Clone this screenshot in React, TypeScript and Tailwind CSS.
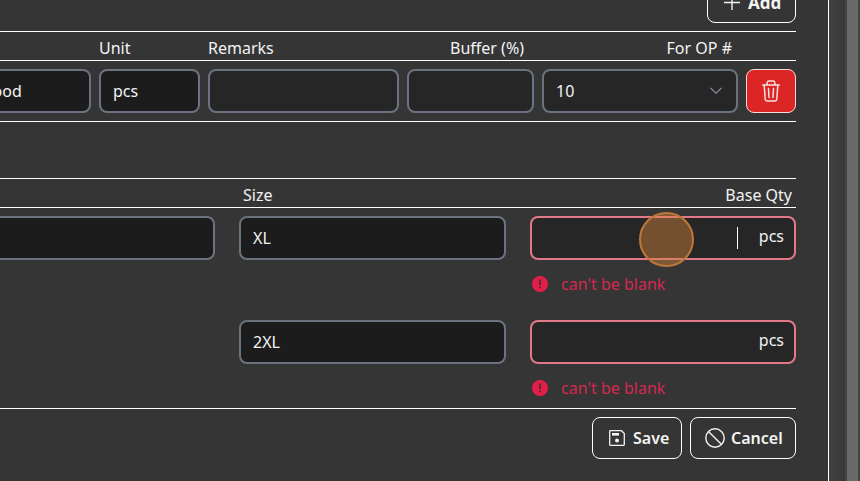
import type { ReactNode } from "react";

function Field({ children, className = "", tone = "bg-[#1c1c1c]" }: { children?: ReactNode; className?: string; tone?: string }) {
  return (
    <div className={`flex h-11 shrink-0 items-center rounded-lg border-2 border-[#6b7280] ${tone} ${className}`}>
      {children}
    </div>
  );
}

function QuantityField({ focused = false }: { focused?: boolean }) {
  return (
    <div className="flex h-[104px] w-[266px] flex-col">
      <div className="relative flex h-11 items-center justify-end rounded-lg border-2 border-[#e27888] bg-[#262626] pr-2.5 pb-1">
        {focused && <span className="mt-[3px] mr-[21px] h-[22px] w-px bg-white" />}
        <span>pcs</span>
        {focused && (
          <span className="absolute -top-[6px] left-[107px] size-[55px] rounded-full border-2 border-[#bd7738] bg-[#d6853f]/45" />
        )}
      </div>
      <p className="mt-3 flex items-center gap-[13px] pl-0.5 text-[#d42850]">
        <svg className="size-4" viewBox="0 0 16 16">
          <circle cx="8" cy="8" r="8" fill="#e11d48" />
          <path d="M8 4v4.5" stroke="#353535" strokeWidth="1.7" strokeLinecap="round" />
          <circle cx="8" cy="11.5" r="1" fill="#353535" />
        </svg>
        <span>can't be blank</span>
      </p>
    </div>
  );
}

export default function App() {
  return (
    <div className="flex h-[481px] w-[860px] overflow-hidden bg-[#353535] font-['Noto_Sans',sans-serif] text-base leading-6 text-[#f3f3f3]">
      <main className="h-full w-[829px] shrink-0 border-r border-white">
        <div className="flex w-[796px] flex-col">
          <div className="flex h-[31px] items-end justify-end pb-2">
            <button className="-mt-[19px] flex h-[42px] w-[89px] items-center gap-2 rounded-lg border border-white pl-4 text-[17px] font-bold">
              <svg className="size-4" viewBox="0 0 16 16" fill="none" stroke="currentColor" strokeWidth="1.4">
                <path d="M0 8.5h16M8 0v16.5" />
              </svg>
              <span className="pt-px">Add</span>
            </button>
          </div>

          <div className="flex h-[30px] items-center border-y border-white pt-[3px]">
            <span className="ml-[99px] w-[109px]">Unit</span>
            <span className="w-[191px]">Remarks</span>
            <span className="w-[125px] text-right">Buffer (%)</span>
            <span className="w-[208px] text-right">For OP #</span>
          </div>
          <div className="flex h-[61px] items-center gap-2 border-b border-white">
            <Field className="-ml-10 w-[131px] pl-[18px]">wood</Field>
            <Field className="w-[101px] pl-3">pcs</Field>
            <Field className="w-[191px]" tone="bg-[#262626]" />
            <Field className="w-[127px]" tone="bg-[#262626]" />
            <Field className="w-[196px] justify-between pr-3.5 pl-3" tone="bg-[#262626]">
              10
              <svg className="h-2 w-3" viewBox="0 0 12 8" fill="none" stroke="#79808b" strokeWidth="1.4" strokeLinecap="round" strokeLinejoin="round">
                <path d="m.8 1.2 5.2 5 5.2-5" />
              </svg>
            </Field>
            <button aria-label="Delete" className="flex h-11 w-[50px] shrink-0 items-center justify-center rounded-lg border border-[#fbdada] bg-[#dc2626]">
              <svg className="h-[22px] w-[18px]" viewBox="0 0 18 22" fill="none" stroke="#fbe2e2" strokeWidth="1.5" strokeLinecap="round" strokeLinejoin="round">
                <path d="M.7 5h16.6M4.8 5l.5-2.7Q5.5 1 6.8 1h4.4q1.3 0 1.5 1.3l.5 2.7M2.2 5.3l1 14q.1 1.7 1.9 1.7h7.8q1.8 0 1.9-1.7l1-14M6.5 8.5l.5 9M11.5 8.5l-.5 9" />
              </svg>
            </button>
          </div>

          <div className="mt-14 flex h-[30px] items-center justify-between border-y border-white pt-[3px] pr-1 pl-[243px]">
            <span>Size</span>
            <span>Base Qty</span>
          </div>
          <div className="flex h-[104px] items-start gap-6 pt-2">
            <Field className="-ml-4 w-[231px]" />
            <Field className="w-[267px] pl-3">XL</Field>
            <QuantityField focused />
          </div>
          <div className="flex h-[97px] items-start gap-6 border-b border-white pt-2 pl-[239px]">
            <Field className="w-[267px] pl-3">2XL</Field>
            <QuantityField />
          </div>

          <div className="flex justify-end gap-2 pt-2">
            <button className="flex h-[42px] w-[90px] items-center gap-2 rounded-lg border border-white pl-4 font-semibold">
              <svg className="size-4" viewBox="0 0 16 16" fill="none" stroke="currentColor" strokeWidth="1.3">
                <path d="M1.2.7h11.3l2.8 2.8v11.3q0 .5-.5.5H1.2q-.5 0-.5-.5V1.2q0-.5.5-.5Z" />
                <path d="M3 3h7v2.6H3Z" fill="currentColor" stroke="none" />
                <circle cx="8" cy="10.4" r="2" fill="currentColor" stroke="none" />
              </svg>
              Save
            </button>
            <button className="flex h-[42px] w-[106px] items-center gap-[6px] rounded-lg border border-white pl-3.5 font-semibold">
              <svg className="size-5" viewBox="0 0 20 20" fill="none" stroke="currentColor" strokeWidth="1.4">
                <circle cx="10" cy="10" r="9.2" />
                <path d="m3.5 3.5 13 13" />
              </svg>
              Cancel
            </button>
          </div>
        </div>
      </main>
      <aside className="h-full flex-1 bg-linear-to-r from-[#404040] via-[#393939] to-[#333333] pl-4">
        <div className="h-full w-[15px] border-x-2 border-[#434343] bg-[#6a6a6a]" />
      </aside>
    </div>
  );
}
